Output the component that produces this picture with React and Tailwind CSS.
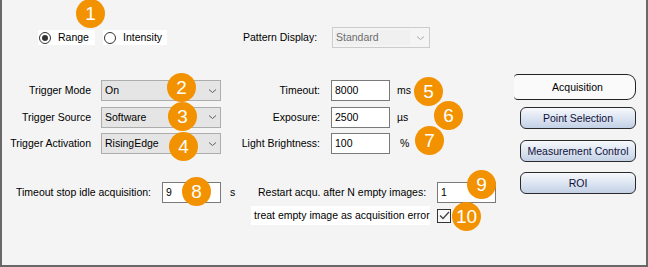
import React from "react";

const Chevron = ({ color = "#606060" }) => (
  <svg width="9" height="6" viewBox="0 0 9 6" className="shrink-0">
    <path d="M1 1.5 L4.5 4.5 L8 1.5" fill="none" stroke={color} strokeWidth="1" />
  </svg>
);

const Combo = ({ value }) => (
  <div className="w-[120px] h-[21px] bg-[#e5e5e5] border border-[#adadad] flex items-center pl-[3px] pr-[3px] justify-between">
    <span>{value}</span>
    <Chevron />
  </div>
);

const Input = ({ value }) => (
  <div className="w-[59px] h-[21px] bg-white border border-[#7a7a7a] flex items-center pl-[3px]">
    {value}
  </div>
);

const Badge = ({ n, cls }) => (
  <div
    className={
      "absolute w-[29px] h-[29px] rounded-full bg-[#f29200] text-white flex items-center justify-center text-[19px] leading-none " +
      cls
    }
  >
    {n}
  </div>
);

const Btn = ({ children, cls }) => (
  <div
    className={
      "ml-[7px] w-[116px] h-[22px] rounded-[6px] border border-[#2a2a2a] bg-gradient-to-b from-[#f7f9fc] to-[#c3d1e6] flex items-center justify-center text-[#10103a] " +
      cls
    }
  >
    {children}
  </div>
);

const Row = ({ label, combo, label2, value, unit }) => (
  <div className="h-[21px] flex items-center">
    <div className="w-[89px] text-right">{label}</div>
    <div className="ml-[10px]">
      <Combo value={combo} />
    </div>
    <div className="w-[99px] text-right">{label2}</div>
    <div className="ml-[11px]">
      <Input value={value} />
    </div>
    <div className="ml-[7px]">{unit}</div>
  </div>
);

export default function App() {
  return (
    <div
      className="relative w-[648px] h-[267px] bg-[#f4f4f4] border-l-2 border-r-2 border-b-2 border-[#686868] flex text-[10.5px] text-black leading-none"
      style={{ fontFamily: '"Liberation Sans", Arial, sans-serif' }}
    >
      <div className="w-[511px] flex flex-col">
        {/* Row 1 */}
        <div className="mt-[27px] h-[21px] flex items-center">
          <div className="ml-[36px] w-[57px] h-[15px] bg-white flex items-center pl-[1px]">
            <div className="w-[12px] h-[12px] rounded-full border border-[#333] flex items-center justify-center">
              <div className="w-[6px] h-[6px] rounded-full bg-[#333]" />
            </div>
            <span className="ml-[7px]">Range</span>
          </div>
          <div className="ml-[8px] w-[64px] h-[15px] bg-white flex items-center pl-[1px]">
            <div className="w-[12px] h-[12px] rounded-full border border-[#333]" />
            <span className="ml-[7px]">Intensity</span>
          </div>
          <div className="ml-[76px] w-[89px]">Pattern Display:</div>
          <div className="w-[98px] h-[21px] border border-[#cccccc] flex items-center justify-between pl-[2px] pr-[4px]">
            <div className="w-[75px] h-[15px] bg-[#f0f0f0] flex items-center pl-[1px] text-[#6d6d6d]">
              Standard
            </div>
            <Chevron color="#a8a8a8" />
          </div>
        </div>

        {/* Trigger rows */}
        <div className="mt-[32px] flex flex-col gap-[5.5px]">
          <Row label="Trigger Mode" combo="On" label2="Timeout:" value="8000" unit="ms" />
          <Row label="Trigger Source" combo="Software" label2="Exposure:" value="2500" unit="µs" />
          <Row
            label="Trigger Activation"
            combo="RisingEdge"
            label2="Light Brightness:"
            value="100"
            unit={<span className="ml-[3px]">%</span>}
          />
        </div>

        {/* Row 5 */}
        <div className="mt-[27px] h-[22px] flex items-center">
          <div className="ml-[14px] w-[146px]">Timeout stop idle acquisition:</div>
          <Input value="9" />
          <div className="ml-[9px] w-[28px]">s</div>
          <div className="w-[179px]">Restart acqu. after N empty images:</div>
          <Input value="1" />
        </div>

        {/* Row 6 */}
        <div className="mt-[3px] h-[19px] flex items-center">
          <div className="ml-[249px] w-[179px] h-[19px] bg-white flex items-center pl-[3px]">
            treat empty image as acquisition error
          </div>
          <div className="ml-[7px] w-[14px] h-[14px] border border-[#333] bg-[#f8f8f8] flex items-center justify-center">
            <svg width="11" height="9" viewBox="0 0 11 9">
              <path d="M1 4.5 L4 7.5 L10 1" fill="none" stroke="#444" strokeWidth="1.3" />
            </svg>
          </div>
        </div>
      </div>

      {/* Right column */}
      <div className="flex flex-col pt-[74px]">
        <div className="ml-[1px] w-[122px] h-[26px] bg-[#fafafa] border-t border-b border-r border-[#222] rounded-r-[9px] rounded-l-[4px] flex items-center justify-center pl-[6px]">
          Acquisition
        </div>
        <Btn cls="mt-[7px]">Point Selection</Btn>
        <Btn cls="mt-[11px]">Measurement Control</Btn>
        <Btn cls="mt-[10px]">ROI</Btn>
      </div>

      <Badge n="1" cls="left-[74px] top-[-1px]" />
      <Badge n="2" cls="left-[165px] top-[73px]" />
      <Badge n="3" cls="left-[166px] top-[102px]" />
      <Badge n="4" cls="left-[167px] top-[132px]" />
      <Badge n="5" cls="left-[412px] top-[77px]" />
      <Badge n="6" cls="left-[432px] top-[101px]" />
      <Badge n="7" cls="left-[413px] top-[126px]" />
      <Badge n="8" cls="left-[180px] top-[177px]" />
      <Badge n="9" cls="left-[465px] top-[170px]" />
      <Badge n="10" cls="left-[450px] top-[202px]" />
    </div>
  );
}
